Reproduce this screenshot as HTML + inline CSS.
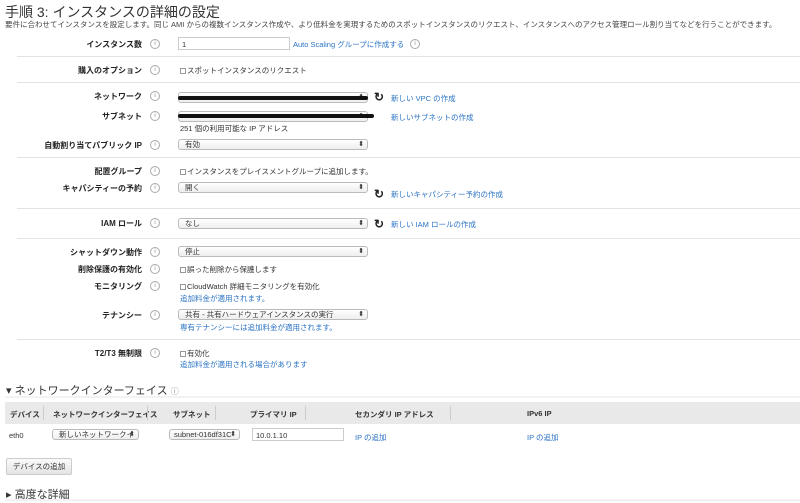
<!DOCTYPE html>
<html><head><meta charset="utf-8"><style>
*{margin:0;padding:0;box-sizing:border-box}
body{width:800px;height:503px;overflow:hidden;background:#fff;font-family:"Liberation Sans","Noto Sans CJK JP",sans-serif;color:#333;position:relative;font-size:8px}
.a{position:absolute;white-space:nowrap}
.l{position:absolute;right:658px;font-weight:bold;font-size:8px;color:#222;white-space:nowrap}
.i{position:absolute;left:150px;width:10px;height:10px;border:1px solid #aaa;border-radius:50%;font-size:6px;color:#888;text-align:center;line-height:8px}
.hr{position:absolute;left:17px;right:0;height:1px;background:#e3e3e3}
.sel{position:absolute;left:178px;width:190px;height:11px;border:1px solid #bbb;border-radius:3px;background:linear-gradient(#fff,#eee);font-size:7.5px;padding-left:6px;line-height:9px;color:#333}
.sel:after{content:"⬍";position:absolute;right:3px;top:0;font-size:7px}
.lk{color:#2a73c4;font-size:7.5px}
.cb{display:inline-block;width:6px;height:6px;border:1px solid #999;margin-right:1px;vertical-align:-1px}
.t{font-size:7.5px}
.r{position:absolute;left:374px;font-size:12px;font-weight:bold;color:#222}
.bar{position:absolute;left:178px;height:4px;background:#111;border-radius:2px}
</style></head><body>
<div class="a" style="left:5px;top:2px;font-size:14px;color:#333">手順 3: インスタンスの詳細の設定</div>
<div class="a t" style="left:5px;top:19px;font-size:7.5px;color:#444">要件に合わせてインスタンスを設定します。同じ AMI からの複数インスタンス作成や、より低料金を実現するためのスポットインスタンスのリクエスト、インスタンスへのアクセス管理ロール割り当てなどを行うことができます。</div>

<div class="l" style="top:39px">インスタンス数</div><div class="i" style="top:39px">i</div>
<div class="a" style="left:178px;top:37px;width:112px;height:13px;border:1px solid #ccc;font-size:7.5px;padding:2px 3px">1</div>
<div class="a lk" style="left:293px;top:39px">Auto Scaling グループに作成する</div><div class="i" style="left:410px;top:39px">i</div>
<div class="hr" style="top:56px"></div>

<div class="l" style="top:65px">購入のオプション</div><div class="i" style="top:65px">i</div>
<div class="a t" style="left:180px;top:65px"><span class="cb"></span>スポットインスタンスのリクエスト</div>
<div class="hr" style="top:82px"></div>

<div class="l" style="top:91px">ネットワーク</div><div class="i" style="top:91px">i</div>
<div class="sel" style="top:92px"></div><div class="bar" style="top:96px;width:190px"></div>
<div class="r" style="top:90px">↻</div><div class="a lk" style="left:391px;top:93px">新しい VPC の作成</div>
<div class="l" style="top:111px">サブネット</div><div class="i" style="top:111px">i</div>
<div class="sel" style="top:111px"></div><div class="bar" style="top:114px;width:196px"></div>
<div class="a lk" style="left:391px;top:112px">新しいサブネットの作成</div>
<div class="a t" style="left:180px;top:123px">251 個の利用可能な IP アドレス</div>
<div class="l" style="top:140px">自動割り当てパブリック IP</div><div class="i" style="top:140px">i</div>
<div class="sel" style="top:139px">有効</div>
<div class="hr" style="top:157px"></div>

<div class="l" style="top:166px">配置グループ</div><div class="i" style="top:166px">i</div>
<div class="a t" style="left:180px;top:166px"><span class="cb"></span>インスタンスをプレイスメントグループに追加します。</div>
<div class="l" style="top:183px">キャパシティーの予約</div><div class="i" style="top:183px">i</div>
<div class="sel" style="top:182px">開く</div>
<div class="r" style="top:187px">↻</div><div class="a lk" style="left:391px;top:189px">新しいキャパシティー予約の作成</div>
<div class="hr" style="top:208px"></div>

<div class="l" style="top:218px">IAM ロール</div><div class="i" style="top:218px">i</div>
<div class="sel" style="top:218px">なし</div>
<div class="r" style="top:217px">↻</div><div class="a lk" style="left:391px;top:219px">新しい IAM ロールの作成</div>
<div class="hr" style="top:238px"></div>

<div class="l" style="top:247px">シャットダウン動作</div><div class="i" style="top:247px">i</div>
<div class="sel" style="top:246px">停止</div>
<div class="l" style="top:264px">削除保護の有効化</div><div class="i" style="top:264px">i</div>
<div class="a t" style="left:180px;top:264px"><span class="cb"></span>誤った削除から保護します</div>
<div class="l" style="top:281px">モニタリング</div><div class="i" style="top:281px">i</div>
<div class="a t" style="left:180px;top:281px"><span class="cb"></span>CloudWatch 詳細モニタリングを有効化</div>
<div class="a lk" style="left:180px;top:293px">追加料金が適用されます。</div>
<div class="l" style="top:310px">テナンシー</div><div class="i" style="top:310px">i</div>
<div class="sel" style="top:309px">共有 - 共有ハードウェアインスタンスの実行</div>
<div class="a lk" style="left:180px;top:322px">専有テナンシーには追加料金が適用されます。</div>
<div class="hr" style="top:339px"></div>

<div class="l" style="top:348px">T2/T3 無制限</div><div class="i" style="top:348px">i</div>
<div class="a t" style="left:180px;top:348px"><span class="cb"></span>有効化</div>
<div class="a lk" style="left:180px;top:359px">追加料金が適用される場合があります</div>

<div class="a" style="left:6px;top:382px;font-size:11px;color:#333">▾ ネットワークインターフェイス <span style="font-size:8px;color:#888">ⓘ</span></div>
<div class="a" style="left:5px;top:396px;width:795px;height:2px;background:#f2f2f2"></div>
<div class="a" style="left:5px;top:402px;width:795px;height:22px;background:#e9e9e9"></div>
<div class="a t" style="left:10px;top:409px;font-weight:bold;color:#333">デバイス</div>
<div class="a" style="left:43px;top:406px;width:1px;height:14px;background:#ccc"></div>
<div class="a t" style="left:53px;top:409px;font-weight:bold">ネットワークインターフェイス</div>
<div class="a" style="left:147px;top:406px;width:1px;height:14px;background:#ccc"></div>
<div class="a t" style="left:173px;top:409px;font-weight:bold">サブネット</div>
<div class="a" style="left:215px;top:406px;width:1px;height:14px;background:#ccc"></div>
<div class="a t" style="left:250px;top:409px;font-weight:bold">プライマリ IP</div>
<div class="a" style="left:305px;top:406px;width:1px;height:14px;background:#ccc"></div>
<div class="a t" style="left:355px;top:409px;font-weight:bold">セカンダリ IP アドレス</div>
<div class="a" style="left:450px;top:406px;width:1px;height:14px;background:#ccc"></div>
<div class="a t" style="left:527px;top:409px;font-weight:bold">IPv6 IP</div>

<div class="a t" style="left:9px;top:431px">eth0</div>
<div class="sel" style="left:52px;top:429px;width:87px">新しいネットワークイ</div>
<div class="sel" style="left:169px;top:429px;width:71px;padding-left:4px">subnet-016df31C</div>
<div class="a t" style="left:252px;top:428px;width:92px;height:13px;border:1px solid #ccc;padding:2px 3px">10.0.1.10</div>
<div class="a lk" style="left:355px;top:432px">IP の追加</div>
<div class="a lk" style="left:527px;top:432px">IP の追加</div>

<div class="a t" style="left:6px;top:458px;width:66px;height:17px;border:1px solid #ccc;border-radius:2px;background:linear-gradient(#fafafa,#e4e4e4);text-align:center;line-height:15px;color:#333">デバイスの追加</div>
<div class="a" style="left:6px;top:486px;font-size:11px;color:#333">▸ 高度な詳細</div>
<div class="a" style="left:5px;top:499px;width:795px;height:2px;background:#f2f2f2"></div>
</body></html>
